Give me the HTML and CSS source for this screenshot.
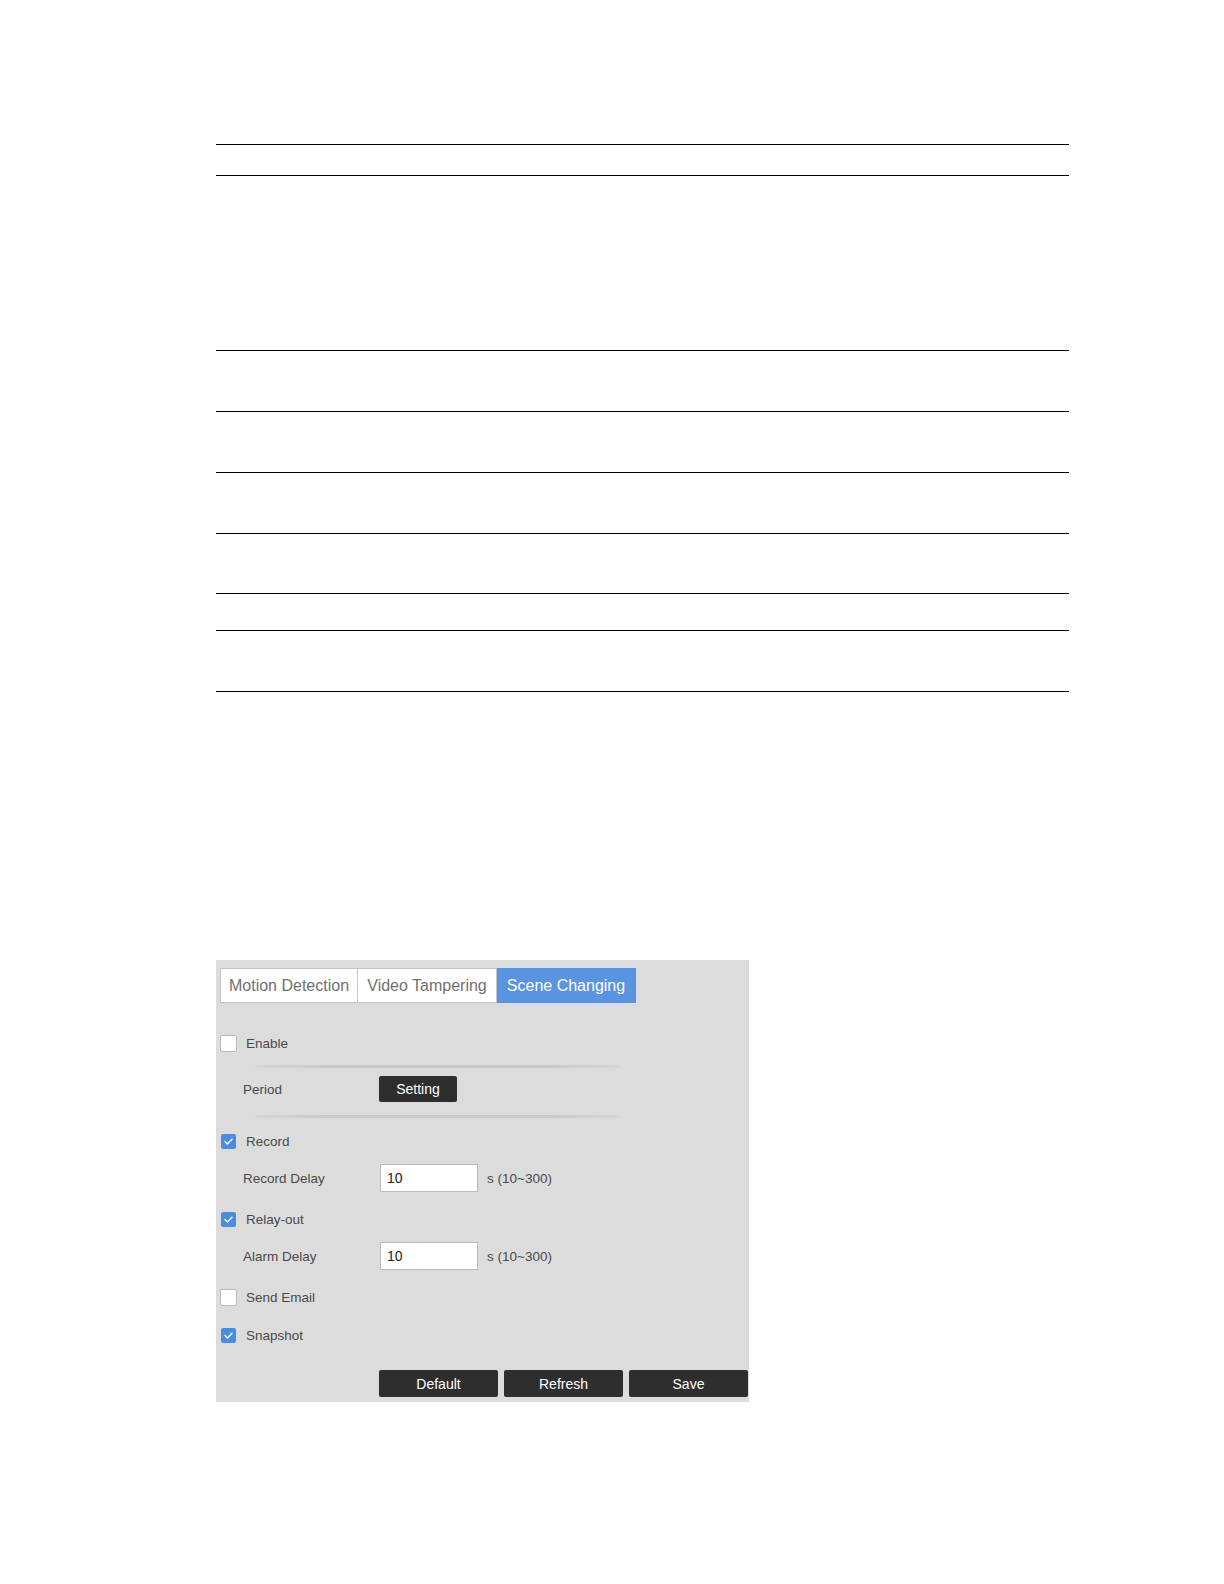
FILE: index.html
```html
<!DOCTYPE html>
<html lang="en">
<head>
    <meta charset="UTF-8">
    <title>Scene Changing</title>
    <link rel="stylesheet" href="styles.css">
</head>
<body>
<div class = "page">
    <div class = "ruleTable">
        <div class = "ruleRow rowHead"></div>
        <div class = "ruleRow rowTall"></div>
        <div class = "ruleRow"></div>
        <div class = "ruleRow"></div>
        <div class = "ruleRow"></div>
        <div class = "ruleRow rowShort"></div>
        <div class = "ruleRow rowThin"></div>
        <div class = "ruleRow rowLast"></div>
    </div>

    <div class = "panel">
        <div class = "tabs">
            <div class = "tab">Motion Detection</div>
            <div class = "tab">Video Tampering</div>
            <div class = "tab active">Scene Changing</div>
        </div>

        <div class = "checkRow enableRow">
            <span class = "box"></span>
            <span class = "checkLabel">Enable</span>
        </div>
        <div class = "groove grooveTop"></div>
        <div class = "fieldRow periodRow">
            <span class = "fieldLabel">Period</span>
            <button class = "darkBtn setting">Setting</button>
        </div>
        <div class = "groove grooveBottom"></div>

        <div class = "checkRow">
            <span class = "box checked">
                <svg viewBox="0 0 15 15" width="15" height="15"><path d="M4 7.6 L6.4 10 L11 5.2" fill="none" stroke="#fff" stroke-width="1.4" stroke-linecap="round" stroke-linejoin="round"/></svg>
            </span>
            <span class = "checkLabel">Record</span>
        </div>
        <div class = "fieldRow">
            <span class = "fieldLabel">Record Delay</span>
            <input class = "numInput" type = "text" value = "10">
            <span class = "hint">s (10~300)</span>
        </div>

        <div class = "checkRow">
            <span class = "box checked">
                <svg viewBox="0 0 15 15" width="15" height="15"><path d="M4 7.6 L6.4 10 L11 5.2" fill="none" stroke="#fff" stroke-width="1.4" stroke-linecap="round" stroke-linejoin="round"/></svg>
            </span>
            <span class = "checkLabel">Relay-out</span>
        </div>
        <div class = "fieldRow">
            <span class = "fieldLabel">Alarm Delay</span>
            <input class = "numInput" type = "text" value = "10">
            <span class = "hint">s (10~300)</span>
        </div>

        <div class = "checkRow">
            <span class = "box"></span>
            <span class = "checkLabel">Send Email</span>
        </div>
        <div class = "checkRow">
            <span class = "box checked">
                <svg viewBox="0 0 15 15" width="15" height="15"><path d="M4 7.6 L6.4 10 L11 5.2" fill="none" stroke="#fff" stroke-width="1.4" stroke-linecap="round" stroke-linejoin="round"/></svg>
            </span>
            <span class = "checkLabel">Snapshot</span>
        </div>

        <div class = "actions">
            <button class = "darkBtn wide">Default</button>
            <button class = "darkBtn wide">Refresh</button>
            <button class = "darkBtn wide">Save</button>
        </div>
    </div>
</div>
</body>
</html>
```

FILE: styles.css
```css
body {
    margin: 0;
    background: #fff;
    font-family: "Liberation Sans", Arial, sans-serif;
}
.page {
    padding-top: 144px;
    margin-left: 216px;
    width: 853px;
}
.ruleRow {
    box-sizing: border-box;
    height: 61px;
    border-top: solid 1px #000;
}
.rowHead {
    height: 31px;
}
.rowTall {
    height: 175px;
}
.rowShort {
    height: 60px;
}
.rowThin {
    height: 37px;
}
.rowLast {
    height: 62px;
    border-bottom: solid 1px #000;
}
.panel {
    margin-top: 268px;
    width: 533px;
    background: #dcdcdc;
    padding: 8px 0 5px 4px;
    box-sizing: border-box;
}
.tabs {
    display: flex;
    height: 35px;
}
.tab {
    box-sizing: border-box;
    width: 139px;
    height: 35px;
    line-height: 33px;
    border: solid 1px #c4c4c4;
    border-left: none;
    background: #fff;
    color: #707070;
    font-size: 16px;
    text-align: center;
}
.tab:first-child {
    width: 138px;
    border-left: solid 1px #c4c4c4;
}
.tab.active {
    background: #5a93df;
    border-color: #5a93df;
    color: #fff;
}
.checkRow {
    display: flex;
    align-items: center;
    height: 38px;
}
.enableRow {
    height: 40px;
    margin-top: 20px;
}
.box {
    box-sizing: border-box;
    width: 17px;
    height: 17px;
    background: #fff;
    border: solid 1px #b9b9b9;
    border-radius: 2px;
    display: flex;
    align-items: center;
    justify-content: center;
}
.box.checked {
    width: 15px;
    height: 15px;
    margin-left: 1px;
    margin-right: 1px;
    background: #4a8de0;
    border: none;
}
.checkLabel {
    margin-left: 9px;
    font-size: 13.5px;
    color: #4a4a4a;
}
.groove {
    margin-left: 35px;
    width: 365px;
    height: 3px;
    background: linear-gradient(to right, #d6d6d6, #c9c9c9 20%, #c9c9c9 80%, #d6d6d6);
}
.grooveTop {
    margin-top: 2px;
}
.grooveBottom {
    margin-top: 5px;
    margin-bottom: 4px;
}
.fieldRow {
    display: flex;
    align-items: center;
    height: 36px;
    margin-bottom: 4px;
}
.periodRow {
    height: 42px;
    margin-bottom: 0;
}
.fieldLabel {
    width: 137px;
    margin-left: 23px;
    font-size: 13.5px;
    color: #4a4a4a;
}
.numInput {
    box-sizing: border-box;
    width: 98px;
    height: 28px;
    border: solid 1px #b9b9b9;
    background: #fff;
    padding: 0 6px;
    font-family: "Liberation Sans", Arial, sans-serif;
    font-size: 14px;
    color: #222;
}
.hint {
    margin-left: 9px;
    font-size: 13.5px;
    color: #4a4a4a;
}
.darkBtn {
    border: none;
    border-radius: 2px;
    background: #2e2e2e;
    color: #fff;
    font-family: "Liberation Sans", Arial, sans-serif;
    font-size: 14px;
    padding: 0;
}
.setting {
    width: 78px;
    height: 26px;
    margin-left: -1px;
}
.actions {
    display: flex;
    gap: 6px;
    margin-top: 16px;
    margin-left: 159px;
}
.wide {
    width: 119px;
    height: 27px;
}
```
